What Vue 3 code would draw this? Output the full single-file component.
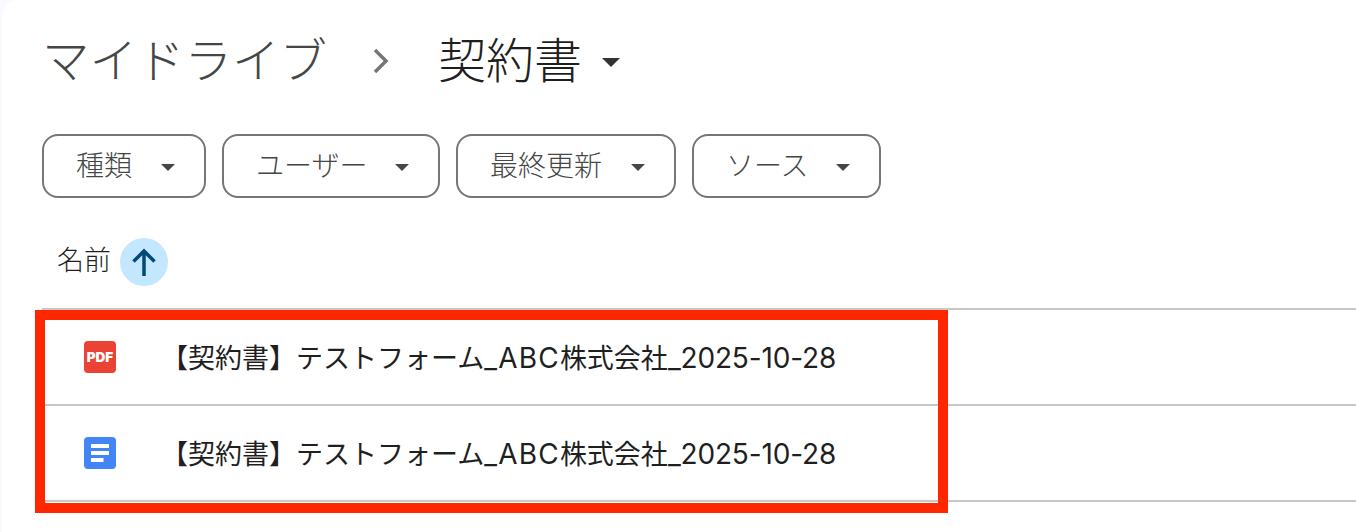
<template>
  <div class="page">
    <div class="crumbs">
      <span class="crumb-root">マイドライブ</span>
      <svg class="crumb-sep" width="18" height="26" viewBox="0 0 18 26"><path d="M3 2 L14 13 L3 24" fill="none" stroke="#747775" stroke-width="3.500" /></svg>
      <span class="crumb-current">契約書</span>
      <span class="crumb-caret"></span>
    </div>

    <div class="filters">
      <button v-for="f in filters" :key="f" class="chip">
        <span>{{ f }}</span>
        <i class="caret"></i>
      </button>
    </div>

    <div class="sort-row">
      <span class="sort-label">名前</span>
      <span class="sort-btn">
        <svg width="28" height="28" viewBox="0 0 28 28"><path d="M14 28 V3 M3.500 13.500 L14 3 L24.500 13.500" fill="none" stroke="#004a77" stroke-width="3.500" /></svg>
      </span>
    </div>

    <div class="list">
      <div v-for="r in rows" :key="r.kind" class="row">
        <svg v-if="r.kind === 'pdf'" class="file-icon" width="32" height="32" viewBox="0 0 32 32">
          <rect width="32" height="32" rx="4" fill="#ea4335" />
          <text x="16" y="21" text-anchor="middle" class="pdf-text">PDF</text>
        </svg>
        <svg v-else class="file-icon" width="32" height="32" viewBox="0 0 32 32">
          <rect width="32" height="32" rx="4" fill="#4285f4" />
          <path d="M7 7h18v4H7zM7 14h18v4H7zM7 21h12.500v4H7z" fill="#fff" />
        </svg>
        <span class="file-name">【契約書】テストフォーム<span class="lat abc">_ABC</span>株式会社<span class="lat date">_2025-10-28</span></span>
      </div>
      <div class="highlight"></div>
    </div>
  </div>
</template>

<script setup>
const filters = ['種類', 'ユーザー', '最終更新', 'ソース']
const rows = [{ kind: 'pdf' }, { kind: 'doc' }]
</script>

<style>
html, body { margin: 0; background: #f8fafd; }
</style>

<style scoped>
.page {
  box-sizing: border-box;
  width: 1356px;
  height: 532px;
  margin-left: 2px;
  padding: 0 0 0 40px;
  background: #fff;
  border-top-left-radius: 16px;
  overflow: hidden;
  font-family: "Inter", "Noto Sans CJK JP", sans-serif;
}
.crumbs {
  display: flex;
  align-items: center;
  height: 58px;
  padding-top: 32px;
}
.crumb-root {
  font-size: 47.500px;
  line-height: 58px;
  font-weight: 300;
  color: #444746;
  width: 288px;
}
.crumb-sep { margin-left: 42px; }
.crumb-current {
  margin-left: 48px;
  font-size: 48px;
  line-height: 58px;
  font-weight: 300;
  color: #1f1f1f;
  width: 144px;
}
.crumb-caret {
  margin-left: 20px;
  margin-top: 3px;
  border-left: 9.500px solid transparent;
  border-right: 9.500px solid transparent;
  border-top: 9.500px solid #333;
}
.filters {
  display: flex;
  gap: 16px;
  margin-top: 44px;
}
.chip {
  display: flex;
  align-items: center;
  justify-content: space-between;
  box-sizing: border-box;
  height: 64px;
  padding: 0 29px 0 32px;
  background: #fff;
  border: 2px solid #747775;
  border-radius: 16px;
  font-family: inherit;
  font-size: 28px;
  font-weight: 300;
  color: #444746;
}
.chip span { margin-top: -5px; }
.chip:nth-child(1) { width: 164px; }
.chip:nth-child(2) { width: 218px; }
.chip:nth-child(3) { width: 220px; }
.chip:nth-child(4) { width: 189px; }
.caret {
  border-left: 7.500px solid transparent;
  border-right: 7.500px solid transparent;
  border-top: 7.500px solid #444746;
  margin-top: 3px;
}
.sort-row {
  display: flex;
  align-items: center;
  gap: 9px;
  margin-top: 40px;
  padding-left: 15px;
  height: 48px;
}
.sort-label {
  font-size: 27px;
  line-height: 48px;
  color: #1f1f1f;
  font-weight: 300;
  margin-top: -2px;
}
.sort-btn {
  display: flex;
  align-items: center;
  justify-content: center;
  width: 48px;
  height: 48px;
  border-radius: 50%;
  background: #c2e7ff;
}
.list {
  position: relative;
  margin-top: 22px;
  border-top: 2px solid #c7c7c7;
}
.row {
  display: flex;
  align-items: center;
  height: 94px;
  padding-left: 42px;
  border-bottom: 2px solid #c7c7c7;
}
.file-icon { flex: none; }
.pdf-text {
  font-family: "Inter", sans-serif;
  font-size: 13.500px;
  font-weight: 900;
  fill: #fff;
}
.file-name {
  margin-left: 45px;
  margin-top: -2px;
  font-size: 27px;
  color: #1f1f1f;
  white-space: nowrap;
}
.lat { font-size: 28px; }
.abc { letter-spacing: 1.2px; }
.date { letter-spacing: -0.15px; }
.highlight {
  position: absolute;
  left: -7px;
  top: 0;
  width: 893px;
  height: 183px;
  border: 10px solid #ff2600;
}
</style>
